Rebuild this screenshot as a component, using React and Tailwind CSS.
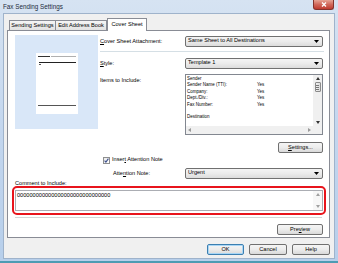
const Arrow = () => (
  <svg width="5" height="3" viewBox="0 0 5 3" className="shrink-0">
    <path d="M0 0h5L2.5 3z" fill="#000" />
  </svg>
);

const Dropdown = ({ label }) => (
  <div className="w-[138px] h-[11px] flex items-center justify-between px-[2px] pr-[3px] border border-[#707070] rounded-[2px] bg-gradient-to-b from-[#f4f4f4] via-[#ebebeb] to-[#dcdcdc]">
    <span className="leading-none">{label}</span>
    <Arrow />
  </div>
);

const Button = ({ children, className = "" }) => (
  <div
    className={
      "h-[11px] flex items-center justify-center border rounded-[2px] bg-gradient-to-b from-[#f5f5f5] via-[#ececec] to-[#d9d9d9] leading-none " +
      className
    }
  >
    {children}
  </div>
);

const rows = [
  ["Sender", ""],
  ["Sender Name (TTI):", "Yes"],
  ["Company:", "Yes"],
  ["Dept./Div.:", "Yes"],
  ["Fax Number:", "Yes"],
  ["", ""],
  ["Destination", ""],
];

export default function App() {
  return (
    <div className="w-[338px] h-[263px] flex flex-col bg-gradient-to-b from-[#d6e3f2] via-[#c3d6ee] to-[#b7cfeb] border-b-2 border-[#4e9bb3] font-['Liberation_Sans',Arial,sans-serif] text-[5.6px] text-black overflow-hidden">
      {/* title bar */}
      <div className="h-[13px] flex items-start justify-between pl-[3px] pr-[4px]">
        <span className="text-[6.3px] leading-none mt-[4px] text-[#1b2a3a]">Fax Sending Settings</span>
        <div className="w-[21px] h-[10px] flex items-center justify-center rounded-b-[3px] border border-t-0 border-[#83332c] bg-gradient-to-b from-[#e6a394] via-[#d0675a] to-[#bf3a2f]">
          <svg width="6" height="5" viewBox="0 0 6 5">
            <path d="M1 0.5l4 4M5 0.5l-4 4" stroke="#fff" strokeWidth="1.3" />
          </svg>
        </div>
      </div>

      {/* client area */}
      <div className="flex-1 mx-[3px] mb-[2px] bg-[#f0f0f0] border border-[#9fb3cb] flex flex-col">
        {/* tabs */}
        <div className="flex items-end pl-[5px] pt-[4px] h-[16px]">
          <div className="w-[47px] h-[10px] flex items-center justify-center border border-b-0 border-[#898c95] bg-gradient-to-b from-[#f5f5f5] to-[#e2e2e2] leading-none">
            Sending Settings
          </div>
          <div className="w-[51px] h-[10px] flex items-center justify-center border border-b-0 border-l-0 border-[#898c95] bg-gradient-to-b from-[#f5f5f5] to-[#e2e2e2] leading-none">
            Edit Address Book
          </div>
          <div className="relative z-10 -mb-[1px] w-[40px] h-[13px] flex items-center justify-center border border-b-0 border-[#898c95] bg-white leading-none">
            Cover Sheet
          </div>
        </div>

        {/* panel */}
        <div className="ml-[3px] mr-[4px] h-[208px] bg-white border border-[#898c95] flex flex-col pt-[4px]">
          <div className="flex pl-[7px]">
            {/* preview */}
            <div className="w-[83px] h-[94px] bg-[#d9e7f8] pt-[18px] pl-[21px]">
              <div className="w-[42px] h-[61px] bg-white pt-[3px] px-[2px] flex flex-col">
                <div className="flex items-center gap-[1px]">
                  <div className="w-[12px] h-[1px] bg-[#333]" />
                  <div className="w-[25px] h-[1px] bg-[#b0b0b0]" />
                </div>
                <div className="mt-[5px] ml-[1px] w-[37px] h-[1px] bg-[#222]" />
                <div className="mt-[1px] ml-[1px] w-[2px] h-[1px] bg-[#555]" />
                <div className="mt-[40px] w-[38px] h-[1px] bg-[#555]" />
              </div>
            </div>

            {/* right column */}
            <div className="ml-[2px] w-[224px] flex flex-col">
              <div className="h-[12px] flex items-center">
                <span className="w-[85px]">
                  <span className="underline">C</span>over Sheet Attachment:
                </span>
                <Dropdown label="Same Sheet to All Destinations" />
              </div>
              <div className="mt-[4px] h-[1px] bg-[#d5dfe5]" />
              <div className="mt-[5px] h-[12px] flex items-center">
                <span className="w-[85px]">
                  <span className="underline">S</span>tyle:
                </span>
                <Dropdown label="Template 1" />
              </div>
              <div className="mt-[5px] flex">
                <span className="w-[85px] pt-[4px] leading-none">Items to Include:</span>
                <div className="w-[138px] h-[61px] border border-[#828790] flex flex-col">
                  <div className="flex flex-1 min-h-0">
                    <div className="flex-1 pl-[1px] pt-[1px] text-[4.5px] leading-[6.4px]">
                      {rows.map(([k, v], i) => (
                        <div key={i} className="flex h-[6.4px]">
                          <span className="w-[70px]">{k}</span>
                          <span>{v}</span>
                        </div>
                      ))}
                    </div>
                    <div className="w-[9px] bg-[#f0f0f0] flex flex-col items-center pt-[2px] pb-[2px]">
                      <svg width="4" height="3" viewBox="0 0 4 3">
                        <path d="M0 3h4L2 0z" fill="#333" />
                      </svg>
                      <div className="mt-[2px] w-[6px] h-[10px] border border-[#8b8b8b] rounded-[1px] bg-gradient-to-r from-[#f2f2f2] to-[#dadada] flex flex-col items-center justify-center gap-[1px]">
                        <div className="w-[3px] h-[1px] bg-[#777]" />
                        <div className="w-[3px] h-[1px] bg-[#777]" />
                        <div className="w-[3px] h-[1px] bg-[#777]" />
                      </div>
                      <div className="flex-1" />
                      <svg width="4" height="3" viewBox="0 0 4 3">
                        <path d="M0 0h4L2 3z" fill="#333" />
                      </svg>
                    </div>
                  </div>
                  <div className="h-[8px] flex">
                    <div className="flex-1 bg-[#f0f0f0] flex items-center justify-between px-[2px]">
                      <svg width="3" height="4" viewBox="0 0 3 4">
                        <path d="M3 0v4L0 2z" fill="#9a9a9a" />
                      </svg>
                      <svg width="3" height="4" viewBox="0 0 3 4">
                        <path d="M0 0v4L3 2z" fill="#9a9a9a" />
                      </svg>
                    </div>
                    <div className="w-[9px] bg-[#f0f0f0]" />
                  </div>
                </div>
              </div>
              <div className="mt-[7px] flex justify-end pr-[1px]">
                <Button className="w-[45px] border-[#707070]">
                  <span>
                    <span className="underline">S</span>ettings...
                  </span>
                </Button>
              </div>
              <div className="mt-[3px] h-[8px] flex items-center pl-[3px] gap-[2px]">
                <div className="w-[7px] h-[7px] border border-[#8e8f8f] bg-gradient-to-br from-[#e9e9e9] to-white flex items-center justify-center">
                  <svg width="5" height="5" viewBox="0 0 5 5">
                    <path d="M0.6 2.6l1.3 1.5L4.4 0.6" stroke="#3b4f8c" strokeWidth="1.1" fill="none" />
                  </svg>
                </div>
                <span className="leading-none">
                  Inser<span className="underline">t</span> Attention Note
                </span>
              </div>
              <div className="mt-[3px] h-[12px] flex items-center">
                <span className="w-[85px] pl-[13px]">
                  Atte<span className="underline">n</span>tion Note:
                </span>
                <Dropdown label="Urgent" />
              </div>
            </div>
          </div>

          {/* comment */}
          <div className="mt-[2px] ml-[7px] leading-[5px] h-[5px]">Comment to Include:</div>
          <div className="ml-[4px] mr-[3px] h-[29px] border-2 border-[#e8141c] rounded-[5px] px-[1px] py-[2px]">
            <div className="h-full border border-[#abadb3] bg-white flex">
              <div className="flex-1 pl-[1px] pt-[2px] leading-none">000000000000000000000000000000</div>
              <div className="w-[9px] flex flex-col items-center justify-between py-[2px] bg-[#f7f7f7]">
                <svg width="4" height="3" viewBox="0 0 4 3">
                  <path d="M0 3h4L2 0z" fill="#a0a0a0" />
                </svg>
                <svg width="4" height="3" viewBox="0 0 4 3">
                  <path d="M0 0h4L2 3z" fill="#a0a0a0" />
                </svg>
              </div>
            </div>
          </div>
          <div className="mt-[2px] mx-[7px] h-[1px] bg-[#d6d6d6]" />
          <div className="mt-[6px] flex justify-end pr-[6px]">
            <Button className="w-[46px] border-[#707070]">
              <span>
                Pre<span className="underline">v</span>iew
              </span>
            </Button>
          </div>
        </div>

        {/* dialog buttons */}
        <div className="mt-[6px] flex justify-end gap-[5px] pr-[4px]">
          <Button className="w-[37px] border-[#3c7fb1] shadow-[inset_0_0_0_1px_#a9d6f5]">OK</Button>
          <Button className="w-[38px] border-[#707070]">Cancel</Button>
          <Button className="w-[38px] border-[#707070]">Help</Button>
        </div>
      </div>
    </div>
  );
}
